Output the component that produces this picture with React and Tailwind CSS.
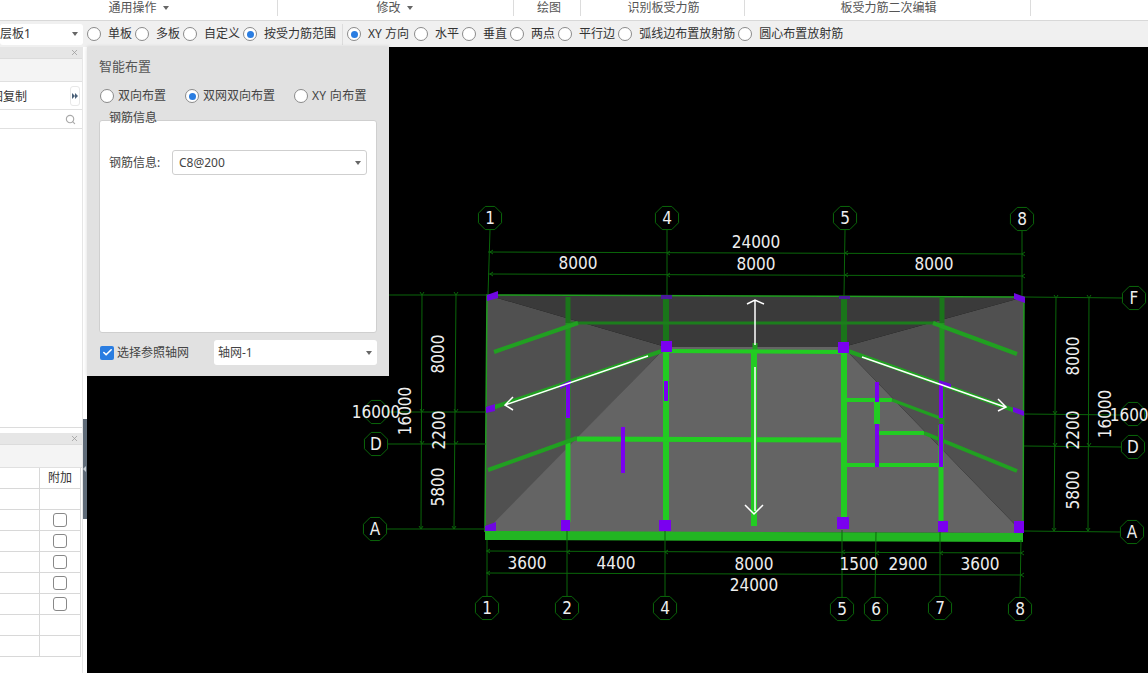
import { Check, Search, X } from 'lucide-react';

const ribbon = [
	{ label: '通用操作', width: 'w-[278px]', caret: true },
	{ label: '修改', width: 'w-[236px]', caret: true, shift: 'pr-[2px]' },
	{ label: '绘图', width: 'w-[67px]', shift: 'pl-[4px]' },
	{ label: '识别板受力筋', width: 'w-[164px]', shift: 'pl-[2px]' },
	{ label: '板受力筋二次编辑', width: 'w-[286px]', shift: 'pl-[2px]' },
];

const modeOptions = [
	{ label: '单板' },
	{ label: '多板' },
	{ label: '自定义' },
	{ label: '按受力筋范围', checked: true },
];

const directionOptions = [
	{ label: 'XY 方向', checked: true, textWidth: 'w-[43px]' },
	{ label: '水平' },
	{ label: '垂直' },
	{ label: '两点' },
	{ label: '平行边' },
	{ label: '弧线边布置放射筋' },
	{ label: '圆心布置放射筋' },
];

const tableRows = [ false, true, true, true, true, true, false, false ];

const Caret = () => (
	<span className="w-0 h-0 border-x-[3px] border-x-transparent border-t-[4px] border-t-[#666]" />
);

const Radio = ( { checked } ) => (
	<span className="w-[14px] h-[14px] shrink-0 rounded-full border border-[#8a8a8a] bg-white flex items-center justify-center">
		{ checked && <span className="w-[7px] h-[7px] rounded-full bg-[#2a7de1]" /> }
	</span>
);

const RadioItem = ( { label, checked, textWidth } ) => (
	<div className="flex items-center gap-[7px] mr-[3px] whitespace-pre">
		<Radio checked={ checked } />
		<span className={ textWidth }>{ label }</span>
	</div>
);

const SelectBox = ( { value, className } ) => (
	<div className={ `flex items-center justify-between bg-white rounded-[3px] ${ className }` }>
		<span>{ value }</span>
		<Caret />
	</div>
);

const PanelHeader = () => (
	<>
		<div className="h-[12px] bg-[#e6e6e6] flex items-center justify-end pr-[3px] border-b border-[#dcdcdc]">
			<X className="w-[9px] h-[9px] text-[#999]" />
		</div>
		<div className="h-[23px] bg-[#f4f4f4] border-b border-[#e0e0e0]" />
	</>
);

const Sidebar = () => (
	<div className="w-[83px] h-full bg-white border-r border-[#e6e6e6] flex flex-col overflow-hidden">
		<PanelHeader />
		<div className="h-[28px] border-b border-[#e0e0e0] flex items-center justify-between pr-[2px] overflow-hidden">
			<span className="-ml-[9px] pt-[2px] text-[#333]">图复制</span>
			<span className="w-[10px] h-[20px] rounded-[3px] border border-[#e8e8e8] flex items-center justify-center">
				<span className="w-0 h-0 border-y-[3px] border-y-transparent border-l-[3px] border-l-[#4a6078]" />
				<span className="w-0 h-0 border-y-[3px] border-y-transparent border-l-[3px] border-l-[#4a6078]" />
			</span>
		</div>
		<div className="h-[19px] border-b border-[#e0e0e0] flex items-center justify-end pr-[6px]">
			<Search className="w-[11px] h-[11px] text-[#aaa]" strokeWidth={ 2.5 } />
		</div>
		<div className="h-[299px] border-b border-[#dcdcdc]" />
		<div className="h-[5px]" />
		<PanelHeader />
		<div className="w-[81px] border-r border-[#d8d8d8]">
			<div className="h-[21px] flex border-b border-[#d8d8d8]">
				<div className="w-[40px] border-r border-[#d8d8d8]" />
				<div className="flex-1 flex items-center justify-center text-[#333]">附加</div>
			</div>
			{ tableRows.map( ( hasBox, i ) => (
				<div key={ i } className="h-[21px] flex border-b border-[#d8d8d8]">
					<div className="w-[40px] border-r border-[#d8d8d8]" />
					<div className="flex-1 flex items-center justify-center">
						{ hasBox && <span className="w-[14px] h-[14px] rounded-[3px] border border-[#888] bg-white" /> }
					</div>
				</div>
			) ) }
		</div>
	</div>
);

const SmartPanel = () => (
	<div className="absolute left-[87px] top-[47px] w-[302px] h-[329px] bg-[#e1e1e1] text-[#444] pt-[10px] px-[12px] flex flex-col shadow-[0_0_4px_rgba(0,0,0,0.15)]">
		<div className="text-[13px] leading-[18px] text-[#555]">智能布置</div>
		<div className="flex items-center mt-[12px] h-[18px] pl-[1px]">
			<div className="flex items-center gap-[4px] w-[85px]">
				<Radio />
				<span>双向布置</span>
			</div>
			<div className="flex items-center gap-[4px] w-[109px]">
				<Radio checked />
				<span>双网双向布置</span>
			</div>
			<div className="flex items-center gap-[4px] whitespace-pre">
				<Radio />
				<span className="tracking-[0.3px]">XY 向布置</span>
			</div>
		</div>
		<div className="relative mt-[15px] h-[213px] w-[278px] bg-white border border-[#cfcfcf] rounded-[3px] pt-[29px] pl-[9px]">
			<span className="absolute left-[9px] -top-[11px] leading-[16px]">钢筋信息</span>
			<div className="flex items-center">
				<span className="w-[63px]">钢筋信息:</span>
				<SelectBox
					value="C8@200"
					className="w-[195px] h-[25px] border border-[#cfcfcf] pl-[6px] pr-[5px]"
				/>
			</div>
		</div>
		<div className="flex items-center mt-[7px] h-[25px]">
			<span className="w-[14px] h-[14px] ml-[1px] rounded-[2px] bg-[#2a7de1] flex items-center justify-center">
				<Check className="w-[11px] h-[11px] text-white" strokeWidth={ 3.5 } />
			</span>
			<span className="ml-[3px] w-[97px]">选择参照轴网</span>
			<SelectBox value="轴网-1" className="w-[163px] h-[25px] pl-[4px] pr-[5px]" />
		</div>
	</div>
);

// axis bubbles: [ label, x, y ]
const bubbles = [
	[ '1', 490, 218 ], [ '4', 667, 218 ], [ '5', 845, 218 ], [ '8', 1022, 219 ],
	[ '1', 487, 608 ], [ '2', 567, 608 ], [ '4', 665, 608 ], [ '5', 842, 609 ],
	[ '6', 876, 609 ], [ '7', 940, 608 ], [ '8', 1020, 609 ],
	[ '', 376, 412 ], [ 'D', 376, 444 ], [ 'A', 375, 529 ],
	[ 'F', 1134, 298 ], [ '', 1133, 414 ], [ 'D', 1133, 447 ], [ 'A', 1132, 532 ],
];

// thin dark green lines: axis and dimension lines
const thinLines = [
	[ 490, 230, 488, 295 ], [ 667, 230, 667, 295 ], [ 845, 230, 844, 296 ], [ 1022, 231, 1022, 296 ],
	[ 488, 252, 1023, 254 ], [ 488, 274, 1023, 276 ],
	[ 389, 295, 487, 295 ], [ 388, 412, 486, 412 ], [ 388, 444, 486, 444 ], [ 387, 529, 486, 529 ],
	[ 422, 295, 421, 529 ], [ 456, 295, 454, 529 ],
	[ 1025, 297, 1122, 298 ], [ 1024, 414, 1121, 415 ], [ 1024, 446, 1121, 447 ], [ 1023, 531, 1120, 532 ],
	[ 1056, 297, 1054, 531 ], [ 1089, 297, 1088, 531 ],
	[ 487, 540, 487, 596 ], [ 567, 531, 567, 596 ], [ 665, 531, 665, 596 ], [ 842, 530, 842, 597 ],
	[ 876, 532, 875, 597 ], [ 940, 532, 940, 597 ], [ 1021, 540, 1020, 597 ],
	[ 486, 551, 1022, 553 ], [ 486, 573, 1022, 575 ],
];

// dimension ticks, drawn as small arrow marks
const hTicks = [
	[ 490, 252 ], [ 667, 253 ], [ 845, 253 ], [ 1022, 254 ], [ 490, 274 ], [ 667, 275 ], [ 845, 275 ], [ 1022, 276 ],
	[ 487, 551 ], [ 567, 552 ], [ 665, 552 ], [ 842, 552 ], [ 876, 553 ], [ 940, 553 ], [ 1021, 553 ],
	[ 487, 573 ], [ 1021, 575 ],
];
const vTicks = [
	[ 422, 295 ], [ 456, 295 ], [ 422, 412 ], [ 456, 412 ], [ 422, 444 ], [ 456, 444 ], [ 421, 529 ], [ 454, 529 ],
	[ 1056, 298 ], [ 1089, 298 ], [ 1055, 414 ], [ 1055, 446 ], [ 1089, 446 ], [ 1054, 531 ], [ 1088, 531 ],
];

const labels = [
	[ '24000', 756, 242 ], [ '8000', 578, 263 ], [ '8000', 756, 264 ], [ '8000', 934, 264 ],
	[ '3600', 527, 563 ], [ '4400', 616, 563 ], [ '8000', 754, 564 ], [ '1500', 859, 564 ],
	[ '2900', 908, 564 ], [ '3600', 980, 564 ], [ '24000', 754, 585 ],
	[ '16000', 376, 412 ], [ '16000', 1134, 415 ],
];

const sideLabels = [
	[ '8000', 438, 354 ], [ '2200', 439, 430 ], [ '5800', 438, 487 ], [ '16000', 405, 411 ],
	[ '8000', 1073, 356 ], [ '2200', 1073, 430 ], [ '5800', 1073, 490 ], [ '16000', 1105, 414 ],
];

// rebar: [ x1, y1, x2, y2, width, colour ]
const BRIGHT = '#22cc22';
const MID = '#21a021';
const DARK = '#1a751a';
const rebars = [
	[ 568, 297, 568, 323, 5, DARK ], [ 568, 323, 568, 442, 5, '#1f941f' ], [ 568, 442, 568, 522, 5, BRIGHT ],
	[ 666, 297, 666, 347, 6, DARK ], [ 666, 347, 666, 522, 6, BRIGHT ],
	[ 844, 297, 844, 347, 6, DARK ], [ 844, 347, 844, 520, 6, BRIGHT ],
	[ 942, 297, 942, 323, 5, DARK ], [ 942, 323, 942, 425, 5, '#1f941f' ], [ 941, 425, 941, 524, 5, BRIGHT ],
	[ 755, 343, 755, 351, 5, MID ], [ 754, 351, 754, 526, 6, BRIGHT ],
	[ 877, 402, 877, 424, 6, BRIGHT ],
	[ 666, 351, 843, 352, 4, BRIGHT ],
	[ 570, 323, 936, 323, 3, '#1c7e1c' ],
	[ 494, 352, 578, 323, 4, MID ], [ 933, 323, 1017, 354, 4, MID ],
	[ 492, 408, 662, 351, 4, MID ], [ 848, 351, 1016, 411, 4, MID ],
	[ 488, 470, 577, 438, 4, MID ], [ 924, 433, 1017, 471, 4, MID ],
	[ 577, 439, 843, 440, 5, BRIGHT ],
	[ 846, 400, 892, 400, 4, BRIGHT ], [ 892, 400, 940, 418, 3, MID ],
	[ 878, 433, 924, 433, 4, BRIGHT ], [ 846, 465, 940, 465, 4, BRIGHT ],
];

const purpleBoxes = [
	[ 661, 341, 11, 11 ], [ 838, 342, 11, 11 ],
	[ 561, 520, 9, 11 ], [ 659, 520, 12, 11 ], [ 837, 517, 12, 12 ], [ 938, 521, 10, 11 ], [ 1014, 521, 10, 12 ],
	[ 566, 382, 4, 36 ], [ 664, 381, 4, 20 ], [ 621, 427, 4, 46 ],
	[ 875, 382, 4, 20 ], [ 875, 424, 4, 43 ], [ 939, 382, 4, 36 ], [ 939, 424, 4, 43 ],
];

const purpleShapes = [
	'487,295 498,291 498,298 487,301', '486,407 495,404 495,411 486,413',
	'485,526 496,522 496,531 485,531', '1014,293 1025,297 1025,303 1014,299',
	'1013,407 1024,411 1024,416 1013,412', '560,385 571,380 571,384 560,389',
	'939,380 951,384 951,388 939,384',
];

const octagon = ( x, y ) =>
	Array.from( { length: 8 }, ( _, i ) => {
		const a = ( Math.PI / 8 ) + ( i * Math.PI ) / 4;
		return `${ x + 12.5 * Math.cos( a ) },${ y + 12.5 * Math.sin( a ) }`;
	} ).join( ' ' );

const FONT = '"DejaVu Sans Condensed", "DejaVu Sans", sans-serif';

const Drawing = () => (
	<svg className="block" width="1061" height="626" viewBox="87 47 1061 626">
		{ /* roof faces */ }
		<polygon points="487,295 1024,297 843,347 666,347" fill="#3a3a3a" />
		<polygon points="487,295 666,347 487,532 485,532" fill="#505050" />
		<polygon points="1024,297 843,347 1023,533" fill="#505050" />
		<polygon points="666,347 843,347 1023,533 485,532" fill="#646464" />

		{ /* rebar */ }
		<polyline points="485,532 487,295 1024,297 1023,533" fill="none" stroke="#1f9e1f" strokeWidth="1.5" />
		{ rebars.map( ( [ x1, y1, x2, y2, w, c ], i ) => (
			<line key={ i } x1={ x1 } y1={ y1 } x2={ x2 } y2={ y2 } stroke={ c } strokeWidth={ w } />
		) ) }
		<polygon points="485,531 1023,533 1023,542 485,540" fill="#22b522" />

		{ /* axis and dimension lines */ }
		{ thinLines.map( ( [ x1, y1, x2, y2 ], i ) => (
			<line key={ i } x1={ x1 } y1={ y1 } x2={ x2 } y2={ y2 } stroke="#0a660a" strokeWidth="1" />
		) ) }
		{ hTicks.map( ( [ x, y ], i ) => (
			<path key={ i } d={ `M${ x + 3 } ${ y - 2 }L${ x } ${ y }L${ x + 3 } ${ y + 2 }` } fill="none" stroke="#0a660a" />
		) ) }
		{ vTicks.map( ( [ x, y ], i ) => (
			<path key={ i } d={ `M${ x - 2 } ${ y - 3 }L${ x } ${ y }L${ x + 2 } ${ y - 3 }` } fill="none" stroke="#0a660a" />
		) ) }

		{ /* purple supports */ }
		<rect x="661" y="295" width="11" height="4" fill="#4a1a9a" />
		<rect x="839" y="296" width="11" height="3" fill="#4a1a9a" />
		{ purpleBoxes.map( ( [ x, y, w, h ], i ) => (
			<rect key={ i } x={ x } y={ y } width={ w } height={ h } fill="#7a00f0" />
		) ) }
		{ purpleShapes.map( ( points ) => (
			<polygon key={ points } points={ points } fill="#6f08e0" />
		) ) }

		{ /* white arrows */ }
		<g fill="none" stroke="#ffffff" strokeWidth="1.5">
			<path d="M755 345V301M747 304L755 300L764 304" />
			<path d="M755 367V511M745 505L754 514L763 505" />
			<path d="M648 356L505 405M513 397L505 405L513 410" />
			<path d="M862 357L1005 407M998 399L1006 407L998 411" />
		</g>

		{ /* axis bubbles */ }
		{ bubbles.map( ( [ label, x, y ], i ) => (
			<g key={ i }>
				<polygon points={ octagon( x, y ) } fill="#000000" stroke="#0a660a" strokeWidth="1" />
				<text x={ x } y={ y + 6 } textAnchor="middle" fontSize="17" fontFamily={ FONT } fill="#eeeeee">
					{ label }
				</text>
			</g>
		) ) }

		{ /* dimension text */ }
		{ labels.map( ( [ t, x, y ], i ) => (
			<text key={ i } x={ x } y={ y + 6 } textAnchor="middle" fontSize="17" fontFamily={ FONT } fill="#eeeeee">
				{ t }
			</text>
		) ) }
		{ sideLabels.map( ( [ t, x, y ], i ) => (
			<text
				key={ i }
				transform={ `translate(${ x + 6 } ${ y }) rotate(-90)` }
				textAnchor="middle"
				fontSize="17"
				fontFamily={ FONT }
				fill="#eeeeee"
			>
				{ t }
			</text>
		) ) }
	</svg>
);

export default function App() {
	return (
		<div className="relative w-[1148px] h-[673px] overflow-hidden flex flex-col bg-white text-[12px] leading-[16px] text-[#333] font-['Noto_Sans','Noto_Sans_CJK_SC',sans-serif]">
			<div className="h-[21px] shrink-0 bg-white border-b border-[#d8d8d8] flex items-start">
				{ ribbon.map( ( item ) => (
					<div
						key={ item.label }
						className={ `${ item.width } ${ item.shift || '' } h-[16px] border-r border-[#dcdcdc] flex items-center justify-center gap-[6px] text-[#555]` }
					>
						<span>{ item.label }</span>
						{ item.caret && <Caret /> }
					</div>
				) ) }
			</div>

			<div className="h-[26px] shrink-0 bg-[#f0f0f0] flex items-center">
				<SelectBox value="层板1" className="w-[83px] h-[21px] mr-[4px] pr-[5px]" />
				{ modeOptions.map( ( item ) => (
					<RadioItem key={ item.label } { ...item } />
				) ) }
				<span className="w-px h-[21px] bg-[#dcdcdc] mx-[3px]" />
				<span className="w-px" />
				{ directionOptions.map( ( item ) => (
					<RadioItem key={ item.label } { ...item } />
				) ) }
			</div>

			<div className="flex-1 flex min-h-0">
				<Sidebar />
				<div className="w-[4px] h-full bg-white">
					<div className="mt-[372px] h-[100px] bg-[#5f6b78] flex items-center">
						<span className="w-0 h-0 border-y-[3px] border-y-transparent border-r-[3px] border-r-[#c8ced4]" />
					</div>
				</div>
				<div className="flex-1 bg-black">
					<Drawing />
				</div>
			</div>

			<SmartPanel />
		</div>
	);
}
